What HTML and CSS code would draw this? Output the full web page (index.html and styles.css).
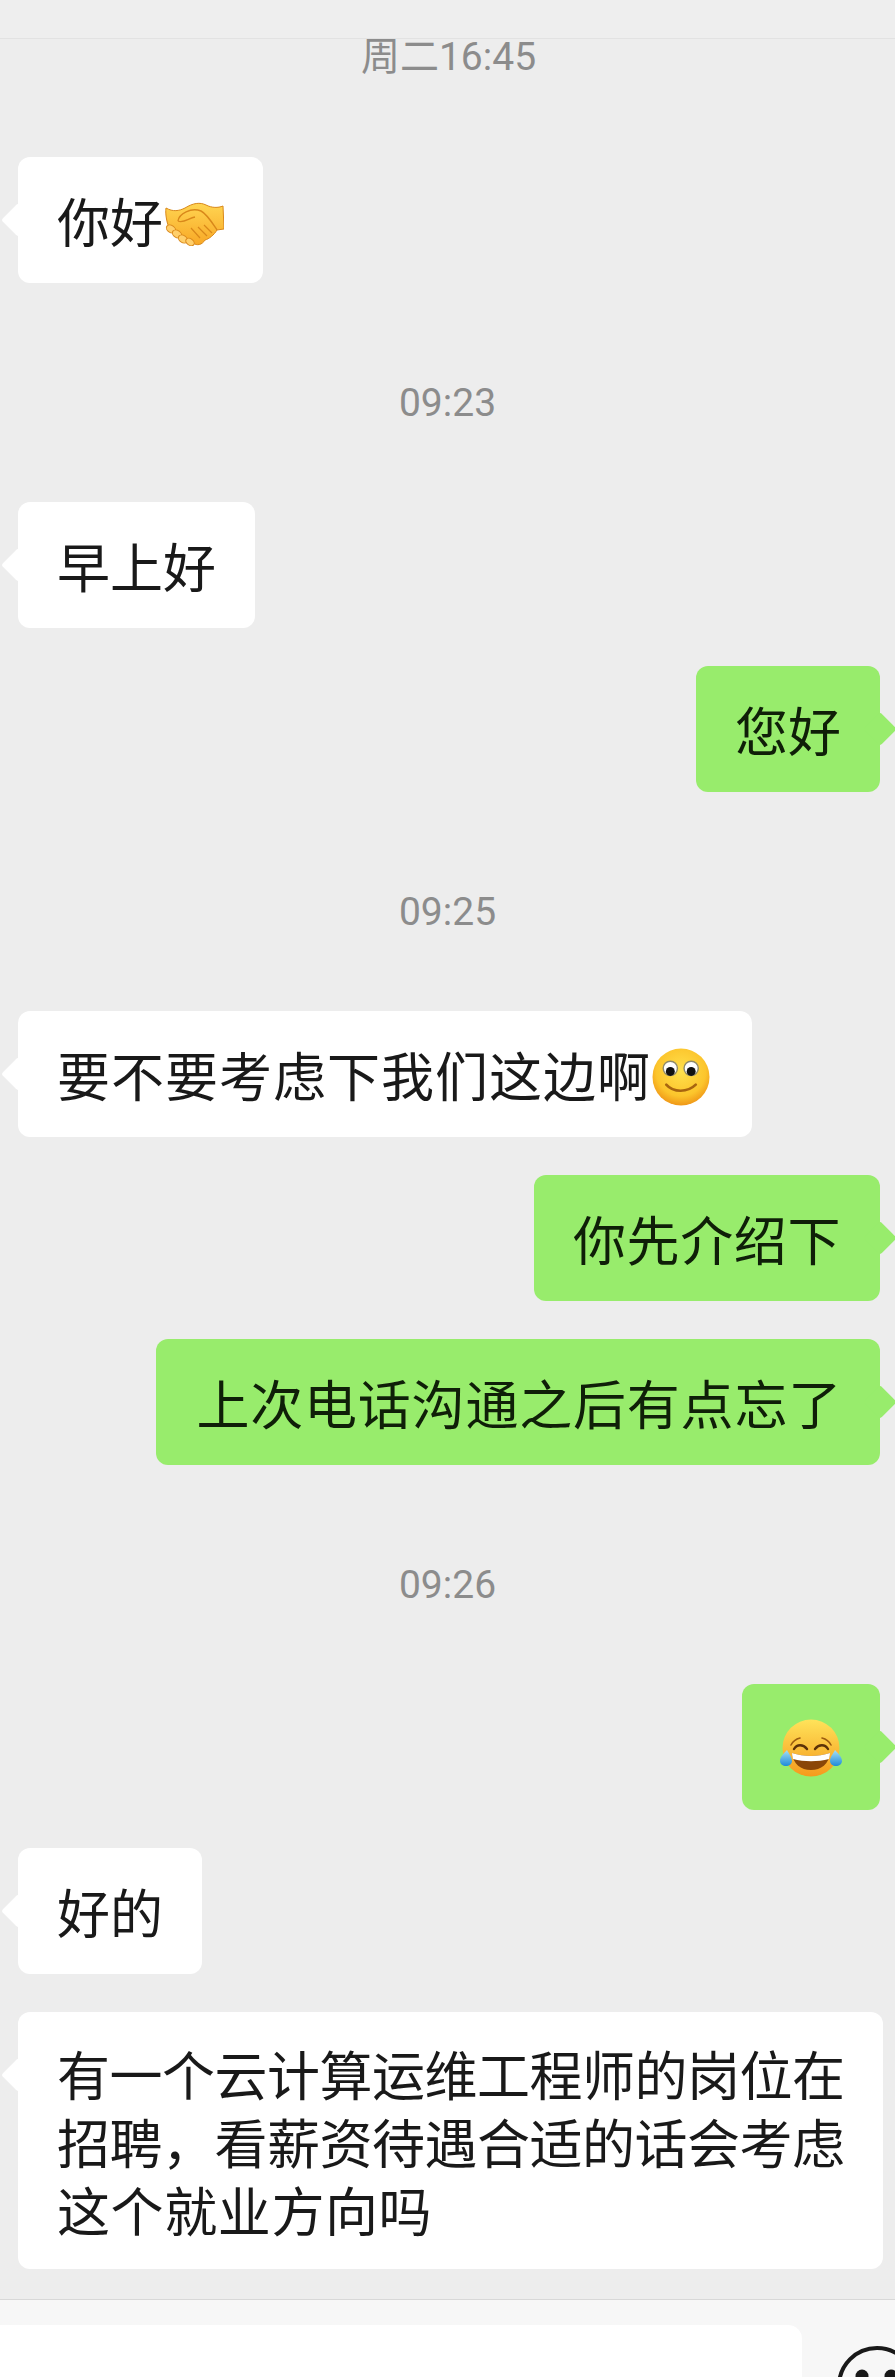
FILE: index.html
```html
<!DOCTYPE html>
<html>
<head>
	<meta charset="UTF-8">
	<title>聊天</title>
	<link rel="stylesheet" href="styles.css">
</head>
<body>
	<div class="topbar"></div>
	<div class="chat">
		<div class="time first">周二16:45</div>
		<div class="msg">
			<div class="bubble">你好<svg class="emoji shake" viewBox="0 0 59 44">
				<defs>
					<linearGradient id="hand" x1="0" y1="0" x2="0" y2="1">
						<stop offset="0" stop-color="#ffd552"/>
						<stop offset="1" stop-color="#f8a826"/>
					</linearGradient>
				</defs>
				<path d="M1 6C8 10 14 9 20 6C28 1 35 0 41 3C47 6 53 6 58 4L59 27L52 28C49 33 44 37 40 38C37 43 32 44 28 41C20 40 10 34 5 28C2 22 0 12 1 6Z" fill="url(#hand)" stroke="#d9881a" stroke-width="1"/>
				<path d="M13 19C14 12 26 5 36 9C42 12 48 22 52 28" fill="none" stroke="#d9881a" stroke-width="1.4"/>
				<path d="M13 19C18 22 24 16 30 15" fill="none" stroke="#d9881a" stroke-width="1.4"/>
				<path d="M26 26L35 36M33 25L42 34M39 23L47 31" stroke="#d9881a" stroke-width="1.2"/>
				<g fill="#ffcf6b" stroke="#d9881a" stroke-width="1">
					<ellipse cx="6" cy="27" rx="5" ry="3.6" transform="rotate(35 6 27)"/>
					<ellipse cx="12" cy="32" rx="5" ry="3.6" transform="rotate(35 12 32)"/>
					<ellipse cx="18" cy="37" rx="5" ry="3.6" transform="rotate(35 18 37)"/>
					<ellipse cx="25" cy="40" rx="4.6" ry="3.2" transform="rotate(35 25 40)"/>
				</g>
			</svg></div>
		</div>
		<div class="time">09:23</div>
		<div class="msg">
			<div class="bubble">早上好</div>
		</div>
		<div class="msg me">
			<div class="bubble">您好</div>
		</div>
		<div class="time">09:25</div>
		<div class="msg">
			<div class="bubble wide">要不要考虑下我们这边啊<svg class="emoji smile" viewBox="0 0 57 57">
				<defs>
					<radialGradient id="face" cx="0.5" cy="0.4" r="0.62">
						<stop offset="0" stop-color="#ffe14d"/>
						<stop offset="0.7" stop-color="#fcc52c"/>
						<stop offset="1" stop-color="#ee9215"/>
					</radialGradient>
				</defs>
				<circle cx="28.5" cy="28.5" r="28" fill="url(#face)"/>
				<circle cx="18" cy="20" r="7" fill="#fff" stroke="#8f8a6a" stroke-width="1.4"/>
				<circle cx="38.5" cy="20" r="7" fill="#fff" stroke="#8f8a6a" stroke-width="1.4"/>
				<circle cx="18" cy="23" r="4.4" fill="#111"/>
				<circle cx="38.5" cy="23" r="4.4" fill="#111"/>
				<path d="M14 36C21 44 35 44 43 36" fill="none" stroke="#a8650f" stroke-width="2.6" stroke-linecap="round"/>
			</svg></div>
		</div>
		<div class="msg me">
			<div class="bubble mid">你先介绍下</div>
		</div>
		<div class="msg me">
			<div class="bubble wide long">上次电话沟通之后有点忘了</div>
		</div>
		<div class="time">09:26</div>
		<div class="msg me">
			<div class="bubble"><svg class="emoji laugh" viewBox="0 0 62 62">
				<defs>
					<linearGradient id="lol" x1="0" y1="0" x2="0" y2="1">
						<stop offset="0" stop-color="#ffe35a"/>
						<stop offset="1" stop-color="#f59a1c"/>
					</linearGradient>
					<linearGradient id="tear" x1="0" y1="0" x2="0" y2="1">
						<stop offset="0" stop-color="#a5e0f5"/>
						<stop offset="1" stop-color="#1f8bd8"/>
					</linearGradient>
				</defs>
				<circle cx="31" cy="29" r="28.5" fill="url(#lol)"/>
				<path d="M11 26C13 22 16 20 20 19M51 26C49 22 46 20 42 19" fill="none" stroke="#9c5d10" stroke-width="1.6" stroke-linecap="round"/>
				<path d="M14 30C17 25 23 25 27 30M35 30C39 25 45 25 48 30" fill="none" stroke="#5c3208" stroke-width="2.4" stroke-linecap="round"/>
				<path d="M12 34C24 38 38 38 50 34C49 45 41 51 31 51C21 51 13 45 12 34Z" fill="#8a4608"/>
				<path d="M12 34C24 38 38 38 50 34C50 37 49 39 49 40C38 43 24 43 13 40C13 39 12 37 12 34Z" fill="#fff"/>
				<path d="M7 31C9 35 12 38 12 42C12 45 9 47 6 47C3 47 0 45 0 42C0 38 4 34 7 31Z" fill="url(#tear)"/>
				<path d="M55 31C53 35 50 38 50 42C50 45 53 47 56 47C59 47 62 45 62 42C62 38 58 34 55 31Z" fill="url(#tear)"/>
			</svg></div>
		</div>
		<div class="msg">
			<div class="bubble">好的</div>
		</div>
		<div class="msg">
			<div class="bubble multi">有一个云计算运维工程师的岗位在<br>招聘，看薪资待遇合适的话会考虑<br><span class="last-line">这个就业方向吗</span></div>
		</div>
	</div>
	<div class="footer">
		<div class="input"></div>
		<svg class="face-btn" viewBox="0 0 80 80">
			<circle cx="40" cy="40" r="38" fill="none" stroke="#191919" stroke-width="4"/>
			<circle cx="25" cy="30" r="6.5" fill="#191919"/>
			<circle cx="54" cy="30" r="6.5" fill="#191919"/>
		</svg>
	</div>
</body>
</html>
```

FILE: styles.css
```css
html, body {margin: 0;padding: 0;}
body {width: 895px;height: 2377px;overflow: hidden;display: flex;flex-direction: column;background: #ededed;font-family: "Noto Sans CJK SC", "Noto Sans", sans-serif;}

.topbar {height: 38px;flex: none;background: #eee;border-bottom: 1px solid #e2e2e2;}
.chat {flex: 1;min-height: 0;}

.time {height: 44px;line-height: 44px;margin: 98px 0 77px;text-align: center;font-family: Roboto, "Noto Sans CJK SC", sans-serif;font-size: 39px;color: #8c8c8c;}
.time.first {height: 36px;line-height: 36px;margin: 0 0 82px;padding-left: 2px;}

.msg {display: flex;justify-content: flex-start;margin: 0 11px 38px 18px;}
.msg.me {justify-content: flex-end;margin-right: 15px;}

.bubble {position: relative;padding: 29px 39px;line-height: 68px;font-size: 53px;color: #191919;background: #fff;border-radius: 12px;white-space: nowrap;}
.bubble.mid {letter-spacing: 0.6px;}
.bubble.wide {letter-spacing: 1px;}
.bubble.long {letter-spacing: 0.8px;padding-right: 38px;padding-left: 40px;}
.bubble.multi {padding: 26.5px 38px 26.5px 39px;letter-spacing: -0.5px;}
.last-line {letter-spacing: 0.6px;}
.bubble:before {content: '';position: absolute;top: 51px;left: -12px;width: 24px;height: 24px;background: inherit;border-radius: 3px;transform: rotate(45deg);}
.msg.me .bubble {background: #98ec6c;color: #0f1f08;}
.msg.me .bubble:before {left: auto;right: -12px;}

.emoji {width: 58px;height: 58px;vertical-align: -9px;margin-left: 1px;}
.emoji.shake {width: 59px;height: 44px;vertical-align: -3px;margin-left: 2px;}
.emoji.smile {margin-right: 3px;}
.emoji.laugh {width: 62px;height: 62px;vertical-align: -11px;margin-left: -1px;margin-right: -1px;}

.footer {height: 78px;flex: none;box-sizing: border-box;display: flex;overflow: hidden;background: #f7f7f7;border-top: 1px solid #d8d8d8;padding-top: 25px;}
.input {width: 802px;height: 90px;flex: none;background: #fff;border-top-right-radius: 14px;}
.face-btn {width: 80px;height: 80px;flex: none;margin: 21px 0 0 35px;}
```
